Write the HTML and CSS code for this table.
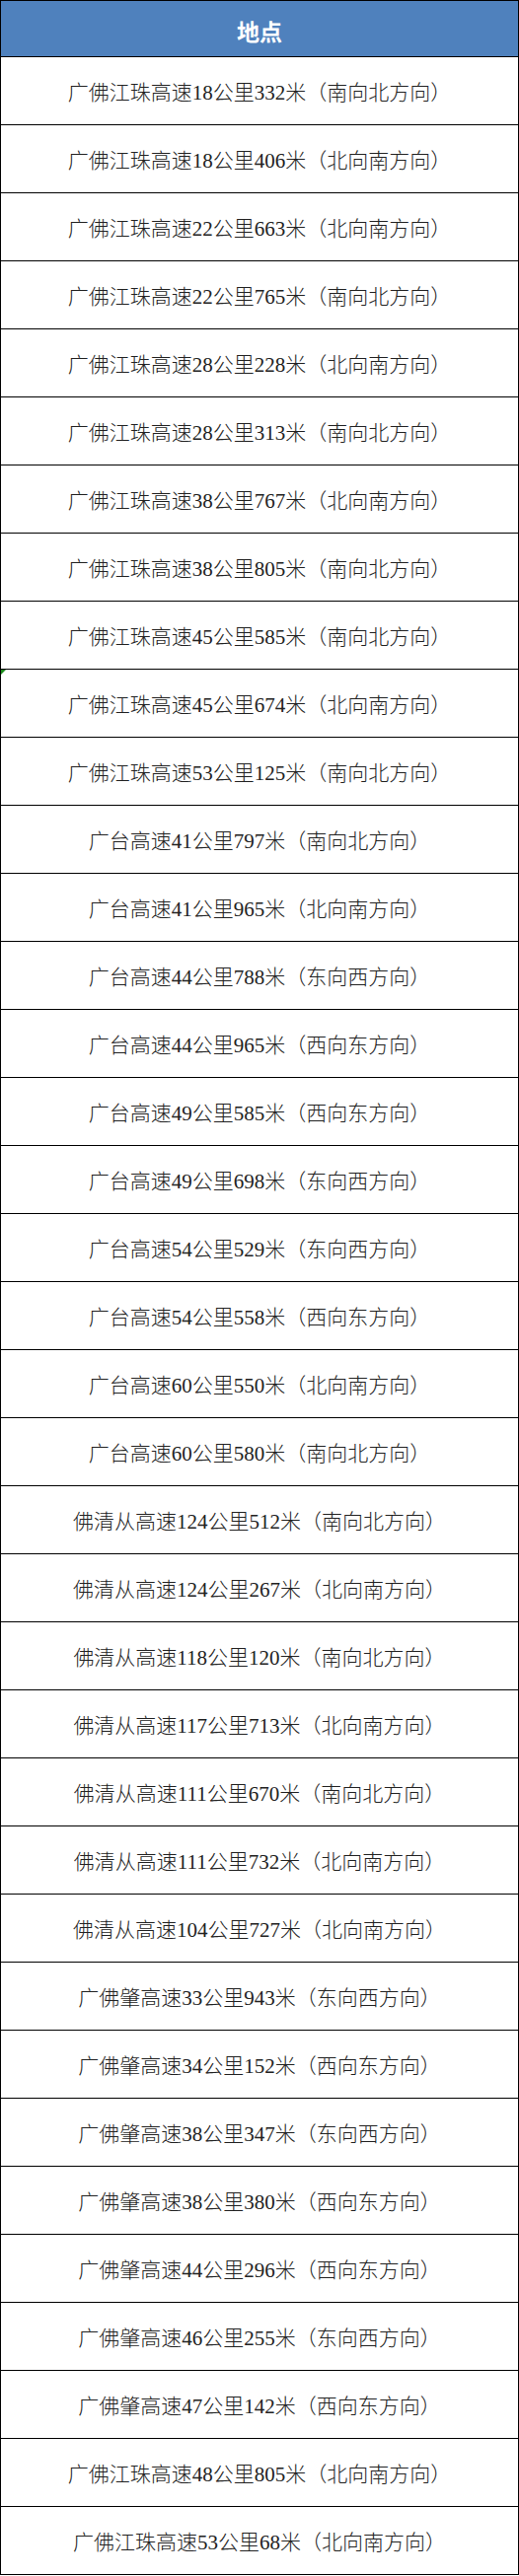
FILE: index.html
```html
<!DOCTYPE html>
<html lang="zh">
<head>
<meta charset="utf-8">
<link rel="stylesheet" href="styles.css">
</head>
<body>
<div class="table">
  <div class="head">地点</div>
  <div class="row">广佛江珠高速18公里332米（南向北方向）</div>
  <div class="row">广佛江珠高速18公里406米（北向南方向）</div>
  <div class="row">广佛江珠高速22公里663米（北向南方向）</div>
  <div class="row">广佛江珠高速22公里765米（南向北方向）</div>
  <div class="row">广佛江珠高速28公里228米（北向南方向）</div>
  <div class="row">广佛江珠高速28公里313米（南向北方向）</div>
  <div class="row">广佛江珠高速38公里767米（北向南方向）</div>
  <div class="row">广佛江珠高速38公里805米（南向北方向）</div>
  <div class="row">广佛江珠高速45公里585米（南向北方向）</div>
  <div class="row marked"><span class="marker"></span>广佛江珠高速45公里674米（北向南方向）</div>
  <div class="row">广佛江珠高速53公里125米（南向北方向）</div>
  <div class="row">广台高速41公里797米（南向北方向）</div>
  <div class="row">广台高速41公里965米（北向南方向）</div>
  <div class="row">广台高速44公里788米（东向西方向）</div>
  <div class="row">广台高速44公里965米（西向东方向）</div>
  <div class="row">广台高速49公里585米（西向东方向）</div>
  <div class="row">广台高速49公里698米（东向西方向）</div>
  <div class="row">广台高速54公里529米（东向西方向）</div>
  <div class="row">广台高速54公里558米（西向东方向）</div>
  <div class="row">广台高速60公里550米（北向南方向）</div>
  <div class="row">广台高速60公里580米（南向北方向）</div>
  <div class="row">佛清从高速124公里512米（南向北方向）</div>
  <div class="row">佛清从高速124公里267米（北向南方向）</div>
  <div class="row">佛清从高速118公里120米（南向北方向）</div>
  <div class="row">佛清从高速117公里713米（北向南方向）</div>
  <div class="row">佛清从高速111公里670米（南向北方向）</div>
  <div class="row">佛清从高速111公里732米（北向南方向）</div>
  <div class="row">佛清从高速104公里727米（北向南方向）</div>
  <div class="row">广佛肇高速33公里943米（东向西方向）</div>
  <div class="row">广佛肇高速34公里152米（西向东方向）</div>
  <div class="row">广佛肇高速38公里347米（东向西方向）</div>
  <div class="row">广佛肇高速38公里380米（西向东方向）</div>
  <div class="row">广佛肇高速44公里296米（西向东方向）</div>
  <div class="row">广佛肇高速46公里255米（东向西方向）</div>
  <div class="row">广佛肇高速47公里142米（西向东方向）</div>
  <div class="row">广佛江珠高速48公里805米（北向南方向）</div>
  <div class="row">广佛江珠高速53公里68米（北向南方向）</div>
</div>
</body>
</html>
```
FILE: styles.css
```css
html, body {
  margin: 0;
  padding: 0;
  background: #ffffff;
}

.table {
  width: 526px;
  box-sizing: border-box;
  border-top: 1px solid #000;
  border-left: 1px solid #000;
  border-right: 1px solid #000;
  display: flex;
  flex-direction: column;
}

.head {
  height: 57px;
  border-bottom: 1px solid #000;
  background: #4f81bd;
  color: #ffffff;
  font-family: "Noto Sans CJK SC", sans-serif;
  font-weight: 700;
  font-size: 23px;
  display: flex;
  align-items: center;
  justify-content: center;
  padding-top: 4px;
  box-sizing: border-box;
}

.row {
  height: 69px;
  box-sizing: border-box;
  border-bottom: 1px solid #000;
  display: flex;
  align-items: center;
  justify-content: center;
  font-family: "Liberation Serif", "Noto Sans CJK SC", serif;
  font-size: 21px;
  font-weight: 300;
  color: #222;
  position: relative;
}

.marker {
  position: absolute;
  left: 0;
  top: 0;
  width: 0;
  height: 0;
  border-top: 5px solid #1a8a1a;
  border-right: 5px solid transparent;
}
```
